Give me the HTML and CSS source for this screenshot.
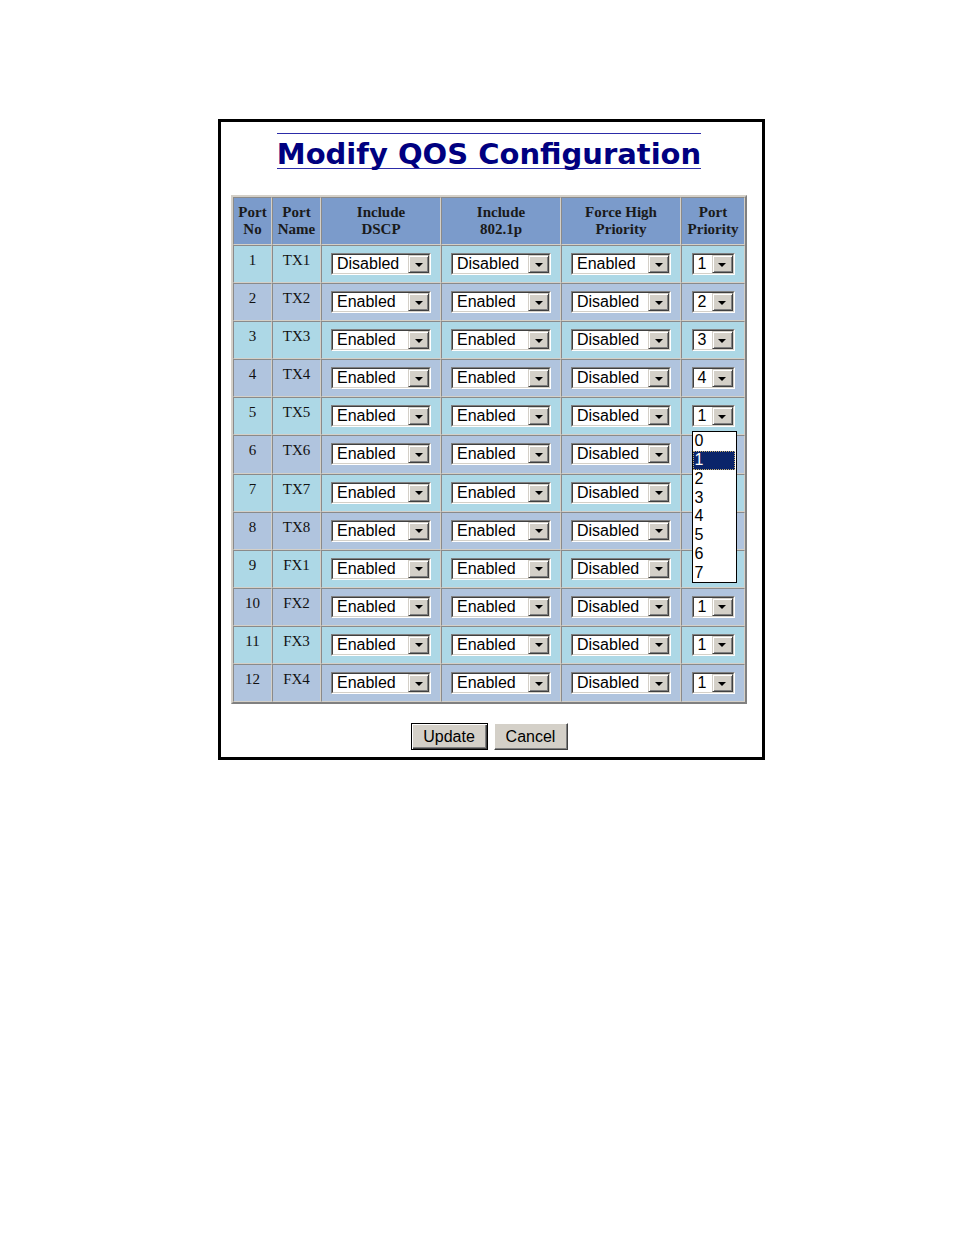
FILE: index.html
```html
<!DOCTYPE html>
<html>
<head>
<meta charset="utf-8">
<title>Modify QOS Configuration</title>
<link rel="stylesheet" href="styles.css">
</head>
<body>
<div class="page">
  <div class="box">
    <div class="title"><span>Modify QOS Configuration</span></div>
    <table class="qos">
      <thead>
        <tr>
          <th class="w1">Port<br>No</th>
          <th class="w2">Port<br>Name</th>
          <th class="w3">Include<br>DSCP</th>
          <th class="w3">Include<br>802.1p</th>
          <th class="w3">Force High<br>Priority</th>
          <th class="w6">Port<br>Priority</th>
        </tr>
      </thead>
      <tbody>
        <tr class="o">
          <td><div class="t">1</div></td><td><div class="t">TX1</div></td>
          <td><div class="sel"><div class="in"><span class="v">Disabled</span><span class="btn"><i class="arr"></i></span></div></div></td>
          <td><div class="sel"><div class="in"><span class="v">Disabled</span><span class="btn"><i class="arr"></i></span></div></div></td>
          <td><div class="sel"><div class="in"><span class="v">Enabled</span><span class="btn"><i class="arr"></i></span></div></div></td>
          <td><div class="sel sm"><div class="in"><span class="v">1</span><span class="btn"><i class="arr"></i></span></div></div></td>
        </tr>
        <tr class="e">
          <td><div class="t">2</div></td><td><div class="t">TX2</div></td>
          <td><div class="sel"><div class="in"><span class="v">Enabled</span><span class="btn"><i class="arr"></i></span></div></div></td>
          <td><div class="sel"><div class="in"><span class="v">Enabled</span><span class="btn"><i class="arr"></i></span></div></div></td>
          <td><div class="sel"><div class="in"><span class="v">Disabled</span><span class="btn"><i class="arr"></i></span></div></div></td>
          <td><div class="sel sm"><div class="in"><span class="v">2</span><span class="btn"><i class="arr"></i></span></div></div></td>
        </tr>
        <tr class="o">
          <td><div class="t">3</div></td><td><div class="t">TX3</div></td>
          <td><div class="sel"><div class="in"><span class="v">Enabled</span><span class="btn"><i class="arr"></i></span></div></div></td>
          <td><div class="sel"><div class="in"><span class="v">Enabled</span><span class="btn"><i class="arr"></i></span></div></div></td>
          <td><div class="sel"><div class="in"><span class="v">Disabled</span><span class="btn"><i class="arr"></i></span></div></div></td>
          <td><div class="sel sm"><div class="in"><span class="v">3</span><span class="btn"><i class="arr"></i></span></div></div></td>
        </tr>
        <tr class="e">
          <td><div class="t">4</div></td><td><div class="t">TX4</div></td>
          <td><div class="sel"><div class="in"><span class="v">Enabled</span><span class="btn"><i class="arr"></i></span></div></div></td>
          <td><div class="sel"><div class="in"><span class="v">Enabled</span><span class="btn"><i class="arr"></i></span></div></div></td>
          <td><div class="sel"><div class="in"><span class="v">Disabled</span><span class="btn"><i class="arr"></i></span></div></div></td>
          <td><div class="sel sm"><div class="in"><span class="v">4</span><span class="btn"><i class="arr"></i></span></div></div></td>
        </tr>
        <tr class="o">
          <td><div class="t">5</div></td><td><div class="t">TX5</div></td>
          <td><div class="sel"><div class="in"><span class="v">Enabled</span><span class="btn"><i class="arr"></i></span></div></div></td>
          <td><div class="sel"><div class="in"><span class="v">Enabled</span><span class="btn"><i class="arr"></i></span></div></div></td>
          <td><div class="sel"><div class="in"><span class="v">Disabled</span><span class="btn"><i class="arr"></i></span></div></div></td>
          <td><div class="sel sm open"><div class="in"><span class="v">1</span><span class="btn"><i class="arr"></i></span></div>
            <ul class="list">
              <li>0</li><li class="cur">1</li><li>2</li><li>3</li><li>4</li><li>5</li><li>6</li><li>7</li>
            </ul>
          </div></td>
        </tr>
        <tr class="e">
          <td><div class="t">6</div></td><td><div class="t">TX6</div></td>
          <td><div class="sel"><div class="in"><span class="v">Enabled</span><span class="btn"><i class="arr"></i></span></div></div></td>
          <td><div class="sel"><div class="in"><span class="v">Enabled</span><span class="btn"><i class="arr"></i></span></div></div></td>
          <td><div class="sel"><div class="in"><span class="v">Disabled</span><span class="btn"><i class="arr"></i></span></div></div></td>
          <td></td>
        </tr>
        <tr class="o">
          <td><div class="t">7</div></td><td><div class="t">TX7</div></td>
          <td><div class="sel"><div class="in"><span class="v">Enabled</span><span class="btn"><i class="arr"></i></span></div></div></td>
          <td><div class="sel"><div class="in"><span class="v">Enabled</span><span class="btn"><i class="arr"></i></span></div></div></td>
          <td><div class="sel"><div class="in"><span class="v">Disabled</span><span class="btn"><i class="arr"></i></span></div></div></td>
          <td></td>
        </tr>
        <tr class="e">
          <td><div class="t">8</div></td><td><div class="t">TX8</div></td>
          <td><div class="sel"><div class="in"><span class="v">Enabled</span><span class="btn"><i class="arr"></i></span></div></div></td>
          <td><div class="sel"><div class="in"><span class="v">Enabled</span><span class="btn"><i class="arr"></i></span></div></div></td>
          <td><div class="sel"><div class="in"><span class="v">Disabled</span><span class="btn"><i class="arr"></i></span></div></div></td>
          <td></td>
        </tr>
        <tr class="o">
          <td><div class="t">9</div></td><td><div class="t">FX1</div></td>
          <td><div class="sel"><div class="in"><span class="v">Enabled</span><span class="btn"><i class="arr"></i></span></div></div></td>
          <td><div class="sel"><div class="in"><span class="v">Enabled</span><span class="btn"><i class="arr"></i></span></div></div></td>
          <td><div class="sel"><div class="in"><span class="v">Disabled</span><span class="btn"><i class="arr"></i></span></div></div></td>
          <td></td>
        </tr>
        <tr class="e">
          <td><div class="t">10</div></td><td><div class="t">FX2</div></td>
          <td><div class="sel"><div class="in"><span class="v">Enabled</span><span class="btn"><i class="arr"></i></span></div></div></td>
          <td><div class="sel"><div class="in"><span class="v">Enabled</span><span class="btn"><i class="arr"></i></span></div></div></td>
          <td><div class="sel"><div class="in"><span class="v">Disabled</span><span class="btn"><i class="arr"></i></span></div></div></td>
          <td><div class="sel sm"><div class="in"><span class="v">1</span><span class="btn"><i class="arr"></i></span></div></div></td>
        </tr>
        <tr class="o">
          <td><div class="t">11</div></td><td><div class="t">FX3</div></td>
          <td><div class="sel"><div class="in"><span class="v">Enabled</span><span class="btn"><i class="arr"></i></span></div></div></td>
          <td><div class="sel"><div class="in"><span class="v">Enabled</span><span class="btn"><i class="arr"></i></span></div></div></td>
          <td><div class="sel"><div class="in"><span class="v">Disabled</span><span class="btn"><i class="arr"></i></span></div></div></td>
          <td><div class="sel sm"><div class="in"><span class="v">1</span><span class="btn"><i class="arr"></i></span></div></div></td>
        </tr>
        <tr class="e">
          <td><div class="t">12</div></td><td><div class="t">FX4</div></td>
          <td><div class="sel"><div class="in"><span class="v">Enabled</span><span class="btn"><i class="arr"></i></span></div></div></td>
          <td><div class="sel"><div class="in"><span class="v">Enabled</span><span class="btn"><i class="arr"></i></span></div></div></td>
          <td><div class="sel"><div class="in"><span class="v">Disabled</span><span class="btn"><i class="arr"></i></span></div></div></td>
          <td><div class="sel sm"><div class="in"><span class="v">1</span><span class="btn"><i class="arr"></i></span></div></div></td>
        </tr>
      </tbody>
    </table>
    <div class="actions">
      <button class="b def" type="button">Update</button>
      <button class="b cancel" type="button">Cancel</button>
    </div>
  </div>
</div>
</body>
</html>
```

FILE: styles.css
```css
html, body {
  margin: 0;
  padding: 0;
  background: #ffffff;
}

.page {
  padding: 119px 0 0 218px;
}

.box {
  width: 516px;
  border: 3px solid #000000;
  padding: 11px 15px 7px 10px;
}

.title {
  display: flex;
  justify-content: center;
}

.title span {
  font-family: "DejaVu Sans", Verdana, sans-serif;
  font-weight: bold;
  font-size: 29px;
  line-height: 28px;
  padding-top: 6px;
  color: #000080;
  border-top: 1px solid #2c2ca8;
  border-bottom: 1px solid #2c2ca8;
  white-space: nowrap;
}

.qos {
  margin-top: 26px;
  width: 516px;
  table-layout: fixed;
  border-collapse: separate;
  border-spacing: 0;
  border: 2px solid;
  border-color: #d4d0c8 #808080 #808080 #d4d0c8;
}

.qos th,
.qos td {
  padding: 0;
  border: 1px solid;
  border-color: #8a8a8a #d4d0c8 #d4d0c8 #8a8a8a;
  text-align: center;
}

.qos th {
  height: 46px;
  background: #7b9bcb;
  font-family: "Liberation Serif", "Times New Roman", serif;
  font-weight: bold;
  font-size: 15px;
  line-height: 17px;
  color: #1a1a1a;
  vertical-align: middle;
}

.w1 { width: 37px; }
.w2 { width: 47px; }
.w3 { width: 118px; }
.w6 { width: 62px; }

.qos td {
  height: 36.1px;
  vertical-align: top;
}

.qos tr.o td { background: #add8e6; }
.qos tr.e td { background: #b0c4de; }

.t {
  padding-top: 6px;
  font-family: "Liberation Serif", "Times New Roman", serif;
  font-size: 15px;
  line-height: 17px;
  color: #111111;
}

.sel {
  position: relative;
  box-sizing: border-box;
  width: 100px;
  height: 22px;
  margin: 7px auto 0;
  border: 1px solid;
  border-color: #808080 #ffffff #ffffff #808080;
  background: #ffffff;
  text-align: left;
}

.sel.sm {
  width: 43px;
}

.sel .in {
  display: flex;
  height: 100%;
  box-sizing: border-box;
  border: 1px solid;
  border-color: #404040 #d4d0c8 #d4d0c8 #404040;
}

.sel .v {
  flex: 1;
  min-width: 0;
  padding-left: 4px;
  font-family: "Liberation Sans", Arial, sans-serif;
  font-size: 16px;
  line-height: 18px;
  color: #000000;
  white-space: nowrap;
  overflow: hidden;
}

.sel .btn {
  flex: none;
  box-sizing: border-box;
  width: 21px;
  height: 18px;
  display: flex;
  align-items: center;
  justify-content: center;
  background: #d4d0c8;
  border: 1px solid;
  border-color: #d4d0c8 #404040 #404040 #d4d0c8;
  box-shadow: inset 1px 1px #ffffff, inset -1px -1px #808080;
}

.arr {
  display: block;
  width: 0;
  height: 0;
  margin-top: 1px;
  border-left: 4px solid transparent;
  border-right: 4px solid transparent;
  border-top: 4px solid #000000;
}

.list {
  position: absolute;
  left: -1px;
  top: 25px;
  z-index: 2;
  box-sizing: border-box;
  width: 45px;
  height: 152px;
  margin: 0;
  padding: 0;
  list-style: none;
  background: #ffffff;
  border: 1px solid #000000;
}

.list li {
  height: 18.75px;
  padding-left: 2px;
  font-family: "Liberation Sans", Arial, sans-serif;
  font-size: 16px;
  line-height: 18.75px;
  color: #000000;
}

.list li.cur {
  margin-right: 1px;
  background: #0a246a;
  color: #ffffff;
  outline: 1px dotted #c8b070;
  outline-offset: -1px;
}

.actions {
  display: flex;
  justify-content: center;
  gap: 6px;
  margin-top: 19px;
}

.b {
  box-sizing: border-box;
  height: 27px;
  margin: 0;
  padding: 0;
  font-family: "Liberation Sans", Arial, sans-serif;
  font-size: 16px;
  line-height: 20px;
  color: #000000;
  background: #d4d0c8;
  border: 1px solid;
  border-color: #ffffff #404040 #404040 #ffffff;
  box-shadow: inset -1px -1px #808080;
}

.b.def {
  width: 77px;
  border-color: #000000;
  box-shadow: inset 1px 1px #ffffff, inset -1px -1px #404040, inset -2px -2px #808080;
}

.b.cancel {
  width: 74px;
}
```
